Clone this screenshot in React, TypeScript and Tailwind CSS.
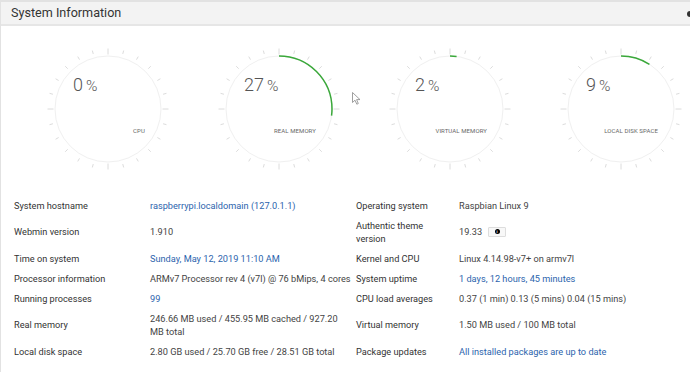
type Gauge = { pct: number; label: string };

const gauges: Gauge[] = [
  { pct: 0, label: "CPU" },
  { pct: 27, label: "REAL MEMORY" },
  { pct: 2, label: "VIRTUAL MEMORY" },
  { pct: 9, label: "LOCAL DISK SPACE" },
];

const R = 53;
const C = 2 * Math.PI * R;

function GaugeDial({ pct, label }: Gauge) {
  const ticks = Array.from({ length: 24 }, (_, i) => i * 15);
  return (
    <div className="relative w-[130px] h-[130px] shrink-0">
      <svg width="130" height="130" viewBox="0 0 130 130">
        {ticks.map((a) => {
          const major = a % 90 === 0;
          const rad = (a * Math.PI) / 180;
          const r1 = major ? 54.5 : 57;
          const r2 = 60.5;
          return (
            <line
              key={a}
              x1={65 + r1 * Math.sin(rad)}
              y1={65 - r1 * Math.cos(rad)}
              x2={65 + r2 * Math.sin(rad)}
              y2={65 - r2 * Math.cos(rad)}
              stroke="#dcdcdc"
              strokeWidth="1"
            />
          );
        })}
        <circle cx="65" cy="65" r={R} fill="none" stroke="#f0f0f0" strokeWidth="1" />
        {pct > 0 && (
          <circle
            cx="65"
            cy="65"
            r={R}
            fill="none"
            stroke="#3aa83a"
            strokeWidth="1.5"
            strokeDasharray={`${(pct / 100) * C} ${C}`}
            transform="rotate(-90 65 65)"
          />
        )}
      </svg>
      <div className="absolute left-[30px] top-[32px] flex items-baseline text-[#555] font-light">
        <span className="text-[18px] leading-none">{pct}</span>
        <span className="text-[15.5px] leading-none ml-[3px]">%</span>
      </div>
      <div className="absolute right-[28px] top-[84px] text-[6px] leading-none text-[#666] tracking-[0.1px]">
        {label}
      </div>
    </div>
  );
}

type Cell = { text: string; link?: boolean; badge?: boolean; nowrap?: boolean };
type Row = { l: string; lv: Cell; r: string; rv: Cell };

const rows: Row[] = [
  {
    l: "System hostname",
    lv: { text: "raspberrypi.localdomain (127.0.1.1)", link: true },
    r: "Operating system",
    rv: { text: "Raspbian Linux 9" },
  },
  {
    l: "Webmin version",
    lv: { text: "1.910" },
    r: "Authentic theme version",
    rv: { text: "19.33", badge: true },
  },
  {
    l: "Time on system",
    lv: { text: "Sunday, May 12, 2019 11:10 AM", link: true },
    r: "Kernel and CPU",
    rv: { text: "Linux 4.14.98-v7+ on armv7l" },
  },
  {
    l: "Processor information",
    lv: { text: "ARMv7 Processor rev 4 (v7l) @ 76 bMips, 4 cores", nowrap: true },
    r: "System uptime",
    rv: { text: "1 days, 12 hours, 45 minutes", link: true },
  },
  {
    l: "Running processes",
    lv: { text: "99", link: true },
    r: "CPU load averages",
    rv: { text: "0.37 (1 min) 0.13 (5 mins) 0.04 (15 mins)" },
  },
  {
    l: "Real memory",
    lv: { text: "246.66 MB used / 455.95 MB cached / 927.20 MB total" },
    r: "Virtual memory",
    rv: { text: "1.50 MB used / 100 MB total" },
  },
  {
    l: "Local disk space",
    lv: { text: "2.80 GB used / 25.70 GB free / 28.51 GB total" },
    r: "Package updates",
    rv: { text: "All installed packages are up to date", link: true },
  },
];

function Value({ cell }: { cell: Cell }) {
  return (
    <div
      className={`py-[3.5px] pr-[8px] flex items-center ${cell.link ? "text-[#2c64ad]" : "text-[#444]"} ${
        cell.nowrap ? "whitespace-nowrap" : ""
      }`}
    >
      <span>{cell.text}</span>
      {cell.badge && (
        <span className="ml-[6px] w-[18px] h-[10px] border border-[#ddd] bg-[#f8f8f8] rounded-[1px] flex items-center justify-center">
          <span className="w-[5px] h-[5px] rounded-full bg-black text-white text-[4px] leading-[5px] font-bold text-center">
            i
          </span>
        </span>
      )}
    </div>
  );
}

export default function App() {
  return (
    <div className="relative w-[690px] h-[372px] overflow-hidden bg-white font-['Roboto',sans-serif]">
      <div className="border-l border-t-[2px] border-[#e2e2e2] h-full">
        <div className="h-[24px] bg-[#f3f3f3] border-b-[2px] border-[#e6e6e6] pl-[10px] flex items-center text-[12.6px] text-[#333]">
          System Information
        </div>

        <div className="flex gap-[41px] pl-[42px] mt-[18px]">
          {gauges.map((g) => (
            <GaugeDial key={g.label} {...g} />
          ))}
        </div>

        <div className="mt-[21px] ml-[13px] grid grid-cols-[136px_206px_103px_1fr] text-[9.2px] leading-[13px]">
          {rows.map((row) => (
            <div key={row.l} className="contents">
              <div className="py-[3.5px] pr-[8px] flex items-center text-[#333]">{row.l}</div>
              <Value cell={row.lv} />
              <div className="py-[3.5px] pr-[8px] flex items-center text-[#333]">{row.r}</div>
              <Value cell={row.rv} />
            </div>
          ))}
        </div>
      </div>

      {/* mouse cursor */}
      <svg className="absolute left-[352px] top-[92px]" width="9" height="13" viewBox="0 0 9 13">
        <path d="M0.5 0.5 L0.5 10.5 L3 8.2 L4.8 12.2 L6.3 11.5 L4.6 7.6 L8 7.6 Z" fill="#fff" stroke="#888" strokeWidth="0.8" />
      </svg>

      {/* cut-off icon at the right edge */}
      <div className="absolute left-[687px] top-[11px] w-[6px] h-[6px] rounded-full bg-[#333]" />
    </div>
  );
}
